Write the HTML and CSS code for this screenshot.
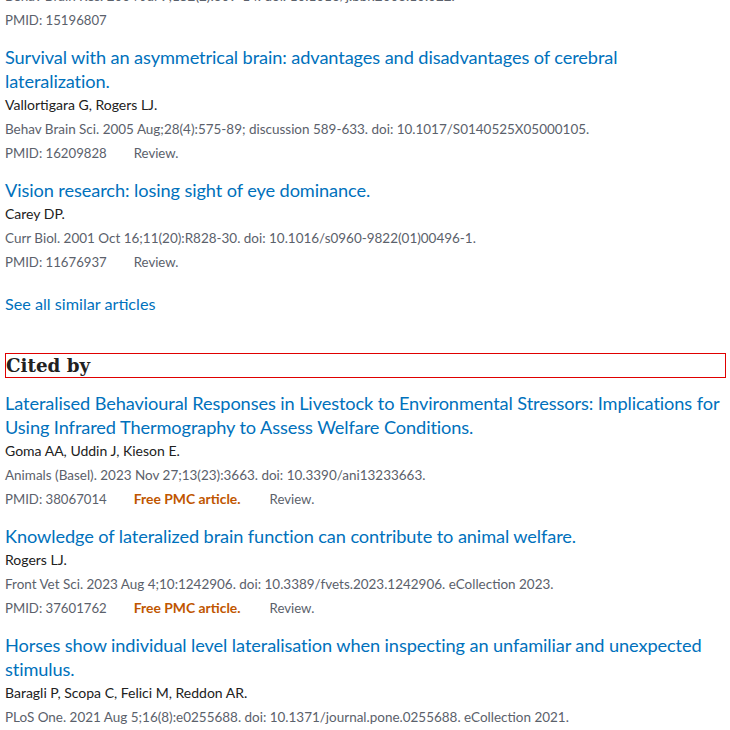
FILE: index.html
```html
<!DOCTYPE html>
<html lang="en">
<head>
<meta charset="utf-8">
<title>Similar articles and Cited by</title>
<link rel="stylesheet" href="styles.css">
</head>
<body>
<main class="page">
  <section class="similar">
    <div class="docsum-list">
      <article class="docsum partial">
        <div class="journal">Behav Brain Res. 2004 Jul 9;152(2):309-14. doi: 10.1016/j.bbr.2003.10.022.</div>
        <div class="meta"><span class="pmid">PMID: 15196807</span></div>
      </article>
      <article class="docsum">
        <a class="title" href="#">Survival with an asymmetrical brain: advantages and disadvantages of cerebral lateralization.</a>
        <div class="authors">Vallortigara G, Rogers LJ.</div>
        <div class="journal">Behav Brain Sci. 2005 Aug;28(4):575-89; discussion 589-633. doi: 10.1017/S0140525X05000105.</div>
        <div class="meta"><span class="pmid">PMID: 16209828</span><span class="type">Review.</span></div>
      </article>
      <article class="docsum">
        <a class="title" href="#">Vision research: losing sight of eye dominance.</a>
        <div class="authors">Carey DP.</div>
        <div class="journal">Curr Biol. 2001 Oct 16;11(20):R828-30. doi: 10.1016/s0960-9822(01)00496-1.</div>
        <div class="meta"><span class="pmid">PMID: 11676937</span><span class="type">Review.</span></div>
      </article>
    </div>
    <a class="see-all" href="#">See all similar articles</a>
  </section>

  <section class="cited">
    <h2 class="heading">Cited by</h2>
    <div class="docsum-list">
      <article class="docsum">
        <a class="title" href="#">Lateralised Behavioural Responses in Livestock to Environmental Stressors: Implications for Using Infrared Thermography to Assess Welfare Conditions.</a>
        <div class="authors">Goma AA, Uddin J, Kieson E.</div>
        <div class="journal">Animals (Basel). 2023 Nov 27;13(23):3663. doi: 10.3390/ani13233663.</div>
        <div class="meta"><span class="pmid">PMID: 38067014</span><span class="free">Free PMC article.</span><span class="type">Review.</span></div>
      </article>
      <article class="docsum">
        <a class="title" href="#">Knowledge of lateralized brain function can contribute to animal welfare.</a>
        <div class="authors">Rogers LJ.</div>
        <div class="journal">Front Vet Sci. 2023 Aug 4;10:1242906. doi: 10.3389/fvets.2023.1242906. eCollection 2023.</div>
        <div class="meta"><span class="pmid">PMID: 37601762</span><span class="free">Free PMC article.</span><span class="type">Review.</span></div>
      </article>
      <article class="docsum">
        <a class="title" href="#">Horses show individual level lateralisation when inspecting an unfamiliar and unexpected stimulus.</a>
        <div class="authors">Baragli P, Scopa C, Felici M, Reddon AR.</div>
        <div class="journal">PLoS One. 2021 Aug 5;16(8):e0255688. doi: 10.1371/journal.pone.0255688. eCollection 2021.</div>
      </article>
    </div>
  </section>
</main>
</body>
</html>
```
FILE: styles.css
```css
html, body {
  margin: 0;
  padding: 0;
  background: #fff;
  overflow: hidden;
}

.page {
  width: 721px;
  margin-top: -16px;
  padding-left: 5px;
  font-family: Lato, "Liberation Sans", sans-serif;
  color: #212121;
}

.docsum-list {
  display: flex;
  flex-direction: column;
  gap: 13px;
}

.docsum {
  display: flex;
  flex-direction: column;
}

.title {
  max-width: 718.5px;
  font-size: 18.2px;
  line-height: 24px;
  letter-spacing: -0.1px;
  color: #0071bc;
  text-decoration: none;
}

.authors {
  font-size: 14px;
  line-height: 24px;
  color: #212121;
}

.journal {
  font-size: 13.47px;
  line-height: 24px;
  color: #5b616b;
  white-space: nowrap;
}

.meta {
  display: flex;
  gap: 27px;
  font-size: 13.2px;
  line-height: 24px;
  color: #5b616b;
}

.free {
  font-weight: bold;
  font-size: 13.9px;
  margin-right: 2px;
  color: #c05600;
}

.see-all {
  display: block;
  margin-top: 18px;
  font-size: 16.2px;
  line-height: 24px;
  color: #0071bc;
  text-decoration: none;
}

.cited {
  margin-top: 37px;
}

.heading {
  margin: 0 0 13px;
  border: 1px solid #e00000;
  font-family: "DejaVu Serif", serif;
  font-weight: bold;
  font-size: 18.3px;
  line-height: 23px;
  color: #212121;
}
```
